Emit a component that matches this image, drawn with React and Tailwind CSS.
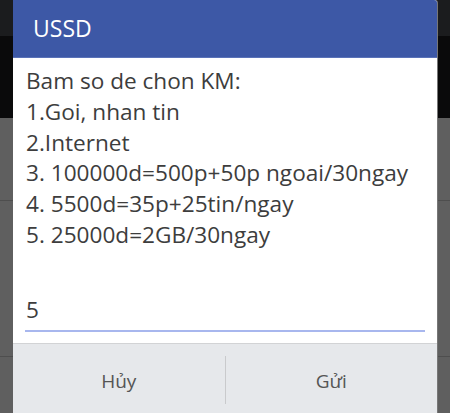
export default function App() {
  const lines = [
    "Bam so de chon KM:",
    "1.Goi, nhan tin",
    "2.Internet",
    "3. 100000d=500p+50p ngoai/30ngay",
    "4. 5500d=35p+25tin/ngay",
    "5. 25000d=2GB/30ngay",
  ];
  return (
    <div
      className="relative w-[450px] h-[413px] overflow-hidden"
      style={{ fontFamily: '"Open Sans", "Noto Sans", sans-serif' }}
    >
      {/* background screen behind dialog */}
      <div className="flex flex-col h-full">
        <div className="h-[36px] bg-[#1b1c1e]" />
        <div className="h-[82px] bg-[#0a0a0b]" />
        <div className="h-[83px] bg-[#5f5f5f] border-b border-[#4e4e4e]" />
        <div className="h-[156px] bg-[#5f5f5f] border-b border-[#4e4e4e]" />
        <div className="flex-1 bg-[#5f5f5f]" />
      </div>

      {/* dialog */}
      <div className="absolute left-[13px] top-0 w-[424px] h-[413px] flex flex-col bg-white rounded-tr-[3px] overflow-hidden shadow-[1px_0_0_#777]">
        <div className="h-[58px] shrink-0 bg-[#3d58a6] border-b border-[#5a72b8] pl-[20px] pt-[14px]">
          <div className="text-white text-[23px] leading-[28px]">USSD</div>
        </div>
        <div className="pl-[13px] pt-[8px] text-[#3d3d3d] text-[22.6px] leading-[30.8px]">
          {lines.map((l, i) => (
            <div key={i} className="whitespace-nowrap">
              {l}
            </div>
          ))}
        </div>
        <div className="mt-[43px] mx-[12px] border-b-2 border-[#a8b7ee] pl-[1px] pb-[5px]">
          <div className="text-[#3d3d3d] text-[22.6px] leading-[31px]">5</div>
        </div>
        <div className="mt-[11px] flex-1 flex bg-[#e6e8eb] border-t border-[#d2d3d5]">
          <div className="flex-1 flex items-center justify-center text-[19px] text-[#555] pt-[6px]">
            Hủy
          </div>
          <div className="w-px bg-[#c9cacc] mt-[12px] mb-[9px]" />
          <div className="flex-1 flex items-center justify-center text-[19px] text-[#555] pt-[6px]">
            Gửi
          </div>
        </div>
      </div>
    </div>
  );
}
